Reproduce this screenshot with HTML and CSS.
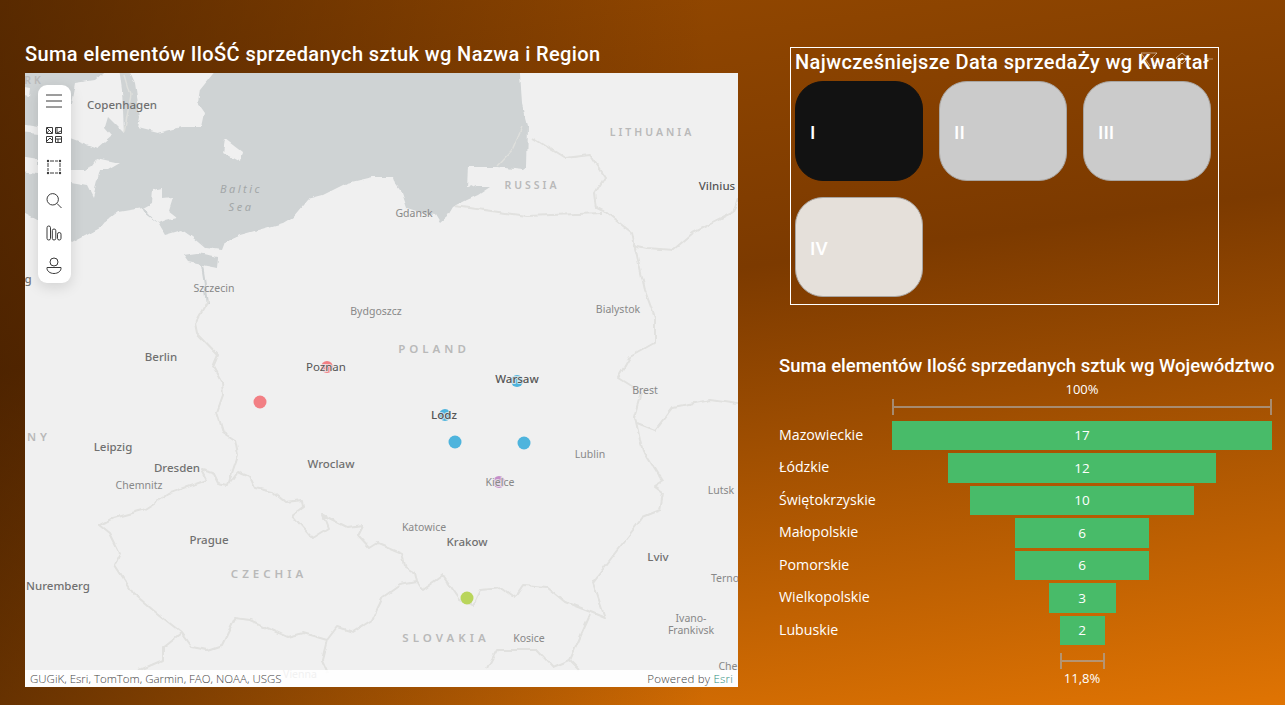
FILE: index.html
```html
<!DOCTYPE html>
<html lang="en">
<head>
    <meta charset="UTF-8">
    <meta name="viewport" content="width=device-width, initial-scale=1.0">
    <title>Sprzedaz dashboard</title>
    <link rel="stylesheet" href="styles.css">
</head>
<body>

<div class="page">
    <section class="map-panel">
        <h2 class="title">Suma elementów IloŚĆ sprzedanych sztuk wg Nazwa i Region</h2>
        <div class="map">
            <svg class="map-svg" viewBox="25 73 713 614" width="713" height="614">
                <defs>
                    <filter id="rough" filterUnits="userSpaceOnUse" x="0" y="40" width="800" height="700">
                        <feTurbulence type="fractalNoise" baseFrequency="0.09" numOctaves="2" seed="4"/>
                        <feDisplacementMap in="SourceGraphic" scale="5" xChannelSelector="R" yChannelSelector="G"/>
                        <feGaussianBlur stdDeviation="0.4"/>
                    </filter>
                </defs>

                <g filter="url(#rough)">
                    <!-- water -->
                    <path class="water" d="M15 60H520L520 73L522 103L528 127L527 167L523 170L497 167L468 167L467 187L470 184L476 187L490 187L478 195L467 200L453 207L447 217L440 223L435 215L423 213L407 208L402 193L395 183L393 177L373 177L347 183L323 195L308 199L293 217L283 223L240 235L225 242L222 250L205 248L192 237L182 230L165 235L158 223L145 213L142 208L118 212L105 222L100 228L72 243L60 232L15 208Z"/>
                    <!-- islands and land over the water -->
                    <path class="land" d="M125 60L135 83L140 117L138 128L158 133L182 127L202 127L205 113L198 103L200 90L212 75L225 60Z"/>
                    <path class="land" d="M75 83L95 80L118 60L122 90L124 133L108 117L105 127L112 135L97 148L70 138L68 120Z"/>
                    <path class="land" d="M97 158L120 163L108 170L100 170L93 197L87 185L70 182L70 170L85 170L92 165Z"/>
                    <path class="land" d="M20 123L38 126L38 134L20 132ZM20 157L38 160L38 174L20 172ZM20 85L31 87L30 97L20 95Z"/>
                    <path class="land" d="M153 190L162 188L162 198L172 197L168 210L177 217L165 220L158 223L148 212L143 208L152 203Z"/>
                    <path class="land" d="M225 139L242 152L240 162L223 153Z"/>
                    <path class="spit" d="M522 127L512 150L497 166"/>
                    <path class="water" d="M183 255L198 253L218 257L217 268L202 265L188 262Z"/>
                    <path class="river" d="M202 265L208 303"/>
                    <path class="spit" d="M125 75L131 95L124 132"/>

                    <!-- borders -->
                    <g class="borders">
                        <path d="M208 300L195 323L197 333L218 355L213 367L222 383L223 395L217 412L223 432L235 440L238 455L228 485L218 483L213 473L202 470L207 480L170 493L143 510L113 518L100 525L110 533L120 553L115 565L133 593L153 610L182 633L192 647L207 650L222 645L235 618L250 620L287 637L303 633L327 640L337 627L353 632L372 620L383 597L400 585L417 582"/>
                        <path d="M230 483L238 472L250 477L255 488L273 492L285 502L302 500L303 507L292 515L312 538L328 528L323 515L347 527L363 525L358 535L370 548L378 543L402 553L405 567L415 573L417 582L422 590L443 575L460 600L473 605L480 590L503 588L515 597L523 585L547 587L565 602L593 613L605 618L593 582L643 517L660 510L663 493L655 487L663 482L643 450L640 440L635 417L642 393L618 378L630 357L655 343L655 317L645 290L635 247L632 233L603 210"/>
                        <path d="M455 206L527 216L602 213"/>
                        <path d="M533 138L565 158L590 155L605 177L595 193L597 208L603 211"/>
                        <path d="M633 245L647 248L673 250L693 233L713 223L733 213L745 177"/>
                        <path d="M637 423L655 430L673 407L710 400L745 405"/>
                        <path d="M487 668L497 650L537 650L553 667L570 660L580 670M570 660L590 615"/>
                        <path d="M327 640L322 660L328 673"/>
                        <path d="M182 633L163 648L163 660L140 670"/>
                    </g>
                </g>

                <!-- data points -->
                <circle class="dot red" cx="260" cy="402" r="6.5"/>
                <circle class="dot red" cx="327" cy="367" r="6"/>
                <circle class="dot blue" cx="455" cy="442" r="6.5"/>
                <circle class="dot blue" cx="524" cy="443" r="6.5"/>
                <circle class="dot blue" cx="445" cy="415" r="6"/>
                <circle class="dot blue" cx="517" cy="381" r="6"/>
                <circle class="dot purple" cx="499" cy="482" r="6"/>
                <circle class="dot green" cx="467" cy="598" r="6.5"/>

                <!-- labels -->
                <g class="labels">
                    <text class="city big" x="122" y="109">Copenhagen</text>
                    <text class="city big" x="161" y="361">Berlin</text>
                    <text class="city" x="214" y="292">Szczecin</text>
                    <text class="city" x="376" y="315">Bydgoszcz</text>
                    <text class="city" x="618" y="313">Bialystok</text>
                    <text class="city dark" x="326" y="371">Poznan</text>
                    <text class="city big dark" x="517" y="383">Warsaw</text>
                    <text class="city big dark" x="444" y="419">Lodz</text>
                    <text class="city" x="645" y="394">Brest</text>
                    <text class="city" x="590" y="458">Lublin</text>
                    <text class="city halo" x="500" y="486">Kielce</text>
                    <text class="city" x="424" y="531">Katowice</text>
                    <text class="city big" x="467" y="546">Krakow</text>
                    <text class="city big" x="658" y="561">Lviv</text>
                    <text class="city" x="725" y="582">Terno</text>
                    <text class="city" x="691" y="622">Ivano-</text>
                    <text class="city" x="691" y="634">Frankivsk</text>
                    <text class="city" x="529" y="642">Kosice</text>
                    <text class="city big" x="209" y="544">Prague</text>
                    <text class="city big" x="331" y="468">Wroclaw</text>
                    <text class="city big" x="113" y="451">Leipzig</text>
                    <text class="city big" x="177" y="472">Dresden</text>
                    <text class="city" x="139" y="489">Chemnitz</text>
                    <text class="city big" x="58" y="590">Nuremberg</text>
                    <text class="city" x="414" y="217">Gdansk</text>
                    <text class="city big dark" x="717" y="190">Vilnius</text>
                    <text class="city" x="721" y="494">Lutsk</text>
                    <text class="city" x="300" y="678">Vienna</text>
                    <text class="city" x="728" y="670">Che</text>
                    <text class="city big" x="28" y="283">g</text>
                    <text class="country" x="434" y="353">POLAND</text>
                    <text class="country" x="269" y="578">CZECHIA</text>
                    <text class="country" x="446" y="642">SLOVAKIA</text>
                    <text class="country small" x="532" y="189">RUSSIA</text>
                    <text class="country small" x="652" y="136">LITHUANIA</text>
                    <text class="country" x="39" y="441">NY</text>
                    <text class="country small" x="34" y="84">RK</text>
                    <text class="sea" x="241" y="193">Baltic</text>
                    <text class="sea" x="241" y="211">Sea</text>
                </g>
            </svg>

            <div class="toolbar">
                <button class="tool">
                    <svg viewBox="0 0 20 20" width="20" height="20"><path d="M2 4H18M2 10H18M2 16H18"/></svg>
                </button>
                <button class="tool">
                    <svg viewBox="0 0 20 20" width="20" height="20"><path d="M2.500 3.500H8.500V9.500H2.500ZM11.500 3.500H17.500V9.500H11.500ZM2.500 12.500H8.500V18.500H2.500ZM11.500 12.500H17.500V18.500H11.500ZM3 4L8 9M5 6.500L3 9M13 4V9L17 7M3 17L6 14L8 16M12 15H17M14 15V18"/></svg>
                </button>
                <button class="tool">
                    <svg viewBox="0 0 20 20" width="20" height="20">
                        <path d="M6 4H14M4 6V14M16 6V14M6 16H14" stroke-dasharray="4 1"/>
                        <circle class="fill" cx="4" cy="4" r="1.200"/><circle class="fill" cx="16" cy="4" r="1.200"/>
                        <circle class="fill" cx="4" cy="16" r="1.200"/><circle class="fill" cx="16" cy="16" r="1.200"/>
                    </svg>
                </button>
                <button class="tool">
                    <svg viewBox="0 0 20 20" width="20" height="20"><circle cx="8.700" cy="9.300" r="5.700"/><path d="M13 13.500L17.500 18"/></svg>
                </button>
                <button class="tool">
                    <svg viewBox="0 0 20 20" width="20" height="20"><rect x="3" y="3" width="3.500" height="14" rx="1.700"/><rect x="8.300" y="6" width="3.500" height="11" rx="1.700"/><rect x="13.500" y="9.500" width="3.500" height="7.500" rx="1.700"/></svg>
                </button>
                <button class="tool">
                    <svg viewBox="0 0 20 20" width="20" height="20"><circle cx="10" cy="6" r="4"/><path d="M3 11.500H17C17.500 15 14 17.500 10 17.500C6 17.500 2.500 15 3 11.500Z"/></svg>
                </button>
            </div>

            <div class="attribution">
                <span>GUGiK, Esri, TomTom, Garmin, FAO, NOAA, USGS</span>
                <span class="powered">Powered by <span class="esri">Esri</span></span>
            </div>
        </div>
    </section>

    <section class="side">
        <div class="slicer">
            <h2 class="title slicer-title">Najwcześniejsze Data sprzedaŻy wg Kwartał</h2>
            <svg class="header-icons" viewBox="0 0 76 16" width="76" height="16">
                <path d="M1 1H17L11 7L17 14M1 1L10 14M36 6L42 1L48 6L42 12ZM64 7H73"/>
            </svg>
            <div class="tiles">
                <div class="tile tile-dark">I</div>
                <div class="tile">II</div>
                <div class="tile">III</div>
                <div class="tile tile-light">IV</div>
            </div>
        </div>

        <div class="funnel">
            <h2 class="title funnel-title">Suma elementów Ilość sprzedanych sztuk wg Województwo</h2>
            <div class="scale-label">100%</div>
            <div class="funnel-body">
                <div class="track"><div class="ruler"></div></div>
                <div class="row">
                    <span class="name">Mazowieckie</span>
                    <div class="track"><div class="bar" style="width: 380px">17</div></div>
                </div>
                <div class="row">
                    <span class="name">Łódzkie</span>
                    <div class="track"><div class="bar" style="width: 268px">12</div></div>
                </div>
                <div class="row">
                    <span class="name">Świętokrzyskie</span>
                    <div class="track"><div class="bar" style="width: 224px">10</div></div>
                </div>
                <div class="row">
                    <span class="name">Małopolskie</span>
                    <div class="track"><div class="bar" style="width: 134px">6</div></div>
                </div>
                <div class="row">
                    <span class="name">Pomorskie</span>
                    <div class="track"><div class="bar" style="width: 134px">6</div></div>
                </div>
                <div class="row">
                    <span class="name">Wielkopolskie</span>
                    <div class="track"><div class="bar" style="width: 67px">3</div></div>
                </div>
                <div class="row">
                    <span class="name">Lubuskie</span>
                    <div class="track"><div class="bar" style="width: 45px">2</div></div>
                </div>
                <div class="track track-bottom"><div class="ruler ruler-small"></div></div>
            </div>
            <div class="scale-label scale-bottom">11,8%</div>
        </div>
    </section>
</div>

</body>
</html>
```

FILE: styles.css
```css
* {
    box-sizing: border-box;
}
body {
    margin: 0;
    width: 1285px;
    height: 705px;
    overflow: hidden;
    font-family: "Open Sans", sans-serif;
    color: #fff;
    background:
        linear-gradient(90deg, rgba(50, 22, 0, 0.62) 0%, rgba(50, 22, 0, 0) 55%),
        linear-gradient(172deg, #974a00 0%, #7c3a00 42%, #e07403 100%);
}
.page {
    display: grid;
    grid-template-columns: 713px 1fr;
    column-gap: 41px;
    padding-left: 25px;
}
.title {
    margin: 0;
    font-family: Roboto, sans-serif;
    font-weight: 500;
    font-size: 20px;
    letter-spacing: 0.4px;
    line-height: 26px;
    white-space: nowrap;
}

/* map */
.map-panel {
    padding-top: 41px;
}
.map-panel .title {
    height: 32px;
}
.map {
    position: relative;
    width: 713px;
    height: 614px;
    overflow: hidden;
    background-color: #f0f0f0;
}
.map-svg {
    display: block;
}
.water {
    fill: #cfd3d4;
}
.land {
    fill: #f0f0f0;
}
.spit {
    fill: none;
    stroke: #dedfdc;
    stroke-width: 1.5;
}
.river {
    fill: none;
    stroke: #cfd3d4;
    stroke-width: 2;
}
.borders path {
    fill: none;
    stroke: #e1e1df;
    stroke-width: 2;
    stroke-linejoin: round;
}
.dot.red {
    fill: #f27f84;
}
.dot.blue {
    fill: #4eb4dd;
}
.dot.purple {
    fill: #c58ec8;
}
.dot.green {
    fill: #b9d55b;
}
.labels text {
    font-family: "Noto Sans", sans-serif;
    text-anchor: middle;
}
.city {
    font-size: 10.5px;
    fill: #888;
}
.city.big {
    font-size: 11.5px;
    font-weight: 500;
    fill: #707070;
}
.city.dark {
    fill: #555;
    font-size: 11.5px;
    paint-order: stroke;
    stroke: rgba(240, 240, 240, 0.75);
    stroke-width: 2px;
}
.city.halo {
    paint-order: stroke;
    stroke: rgba(240, 240, 240, 0.75);
    stroke-width: 2px;
}
.country {
    font-size: 11.5px;
    font-weight: 600;
    letter-spacing: 4px;
    fill: #b9b9b9;
}
.country.small {
    font-size: 10.5px;
    letter-spacing: 3px;
}
.sea {
    font-size: 11px;
    font-style: italic;
    letter-spacing: 2.5px;
    fill: #a3a7a8;
}
.toolbar {
    position: absolute;
    left: 13px;
    top: 12px;
    width: 33px;
    display: flex;
    flex-direction: column;
    border-radius: 9px;
    background-color: #fff;
    box-shadow: 0 4px 14px rgba(0, 0, 0, 0.13);
}
.tool {
    width: 33px;
    height: 33px;
    padding: 0 1px 2px 0;
    border: 0;
    background: none;
    display: flex;
    align-items: center;
    justify-content: center;
}
.tool svg {
    fill: none;
    stroke: #3a3a3a;
    stroke-width: 1;
}
.tool .fill {
    fill: #3a3a3a;
    stroke: none;
}
.attribution {
    position: absolute;
    left: 0;
    right: 0;
    bottom: 0;
    height: 17px;
    padding: 0 5px;
    display: flex;
    justify-content: space-between;
    align-items: center;
    background-color: rgba(255, 255, 255, 0.88);
    font-size: 11.5px;
    font-weight: 300;
    color: #444;
    white-space: nowrap;
}
.powered {
    letter-spacing: 0.2px;
}
.esri {
    color: #2b8c7d;
}

/* right side */
.side {
    min-width: 0;
}
.slicer {
    position: relative;
    width: 429px;
    height: 258px;
    margin-top: 47px;
    margin-left: 11px;
    padding: 1px 4px;
    border: 1px solid #fff;
}
.slicer-title {
    height: 32px;
}
.header-icons {
    position: absolute;
    top: 4px;
    right: 2px;
    fill: none;
    stroke: rgba(255, 255, 255, 0.5);
    stroke-width: 1;
}
.tiles {
    display: grid;
    grid-template-columns: repeat(3, 128px);
    grid-auto-rows: 100px;
    gap: 16px;
}
.tile {
    display: flex;
    align-items: center;
    padding: 2px 0 0 14px;
    border: 1px solid #a9a5a1;
    border-radius: 28px;
    background-color: #cbcbcb;
    font-family: Roboto, sans-serif;
    font-weight: 500;
    font-size: 19px;
}
.tile-dark {
    background-color: #121212;
    border-color: #121212;
}
.tile-light {
    background-color: #e5e0da;
}

/* funnel */
.funnel {
    width: 506px;
    margin-top: 48px;
}
.funnel-title {
    font-size: 18.5px;
    letter-spacing: 0;
    height: 27px;
}
.scale-label {
    width: 380px;
    margin-left: 113px;
    text-align: center;
    font-size: 13px;
    line-height: 18px;
}
.funnel-body {
    margin-top: 1px;
}
.row {
    display: flex;
    align-items: center;
    height: 32.500px;
}
.name {
    width: 113px;
    padding-bottom: 2px;
    font-size: 14.200px;
    white-space: nowrap;
}
.track {
    width: 380px;
    display: flex;
    justify-content: center;
}
.funnel-body > .track {
    margin-left: 113px;
    height: 20px;
}
.funnel-body > .track-bottom {
    height: 22px;
    margin-top: 6px;
}
.ruler {
    width: 100%;
    height: 16px;
    border: solid rgba(170, 165, 160, 0.7);
    border-width: 0 2px;
    background: linear-gradient(rgba(170, 165, 160, 0.7), rgba(170, 165, 160, 0.7)) center / 100% 2px no-repeat;
}
.ruler-small {
    width: 45px;
}
.bar {
    height: 29.500px;
    display: flex;
    align-items: center;
    justify-content: center;
    flex-shrink: 0;
    background-color: #48bb69;
    font-size: 13.500px;
}
.scale-bottom {
    margin-top: -6px;
}
```
